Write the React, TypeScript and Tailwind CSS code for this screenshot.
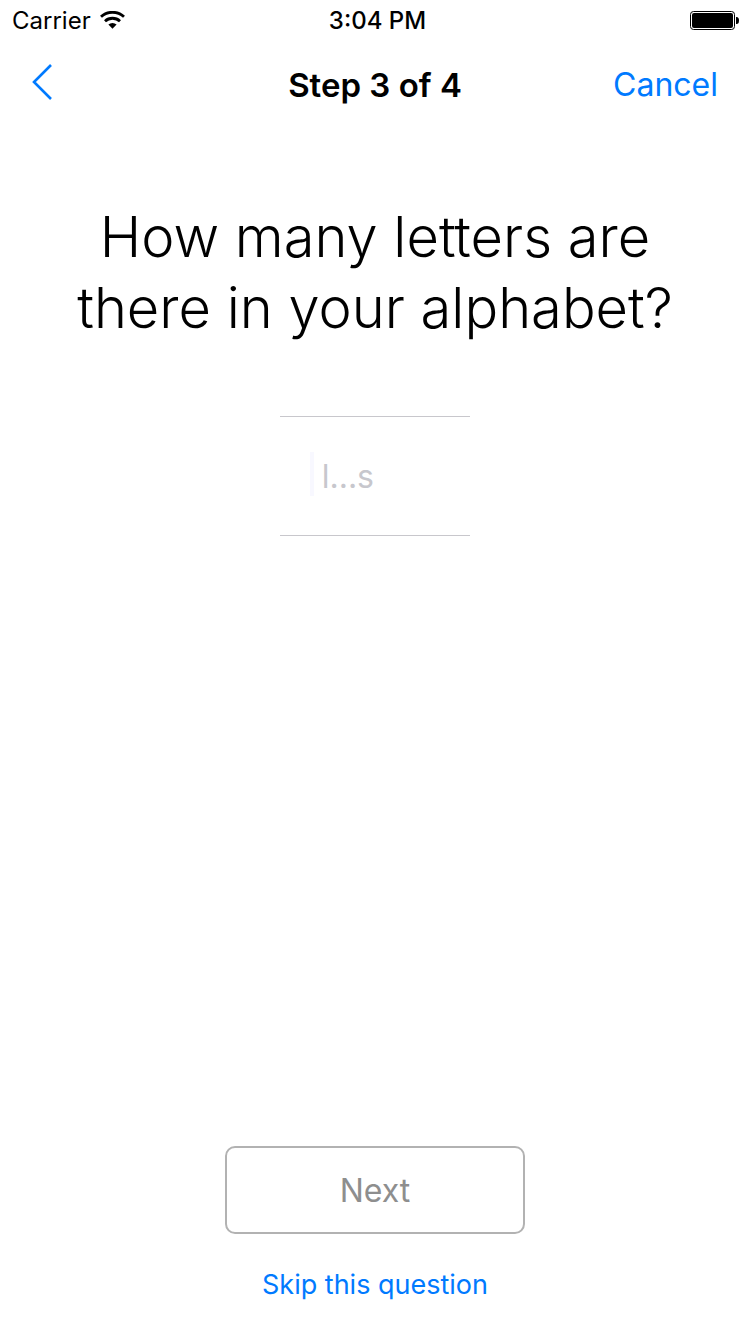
import React from "react";

function StatusBar() {
  return (
    <div className="grid h-[42px] grid-cols-3 items-center pl-3 pr-[11px] text-2xl leading-10">
      <div className="flex items-center gap-[9px]">
        <span>Carrier</span>
        <svg width="25" height="20" viewBox="0 0 25 20" aria-hidden="true">
          <path d="M1 5.8a16.8 16.8 0 0 1 23 0M5 10.2a11 11 0 0 1 15 0" fill="none" stroke="#000" strokeWidth="2.8" />
          <path d="M8.4 13.6a6.2 6.2 0 0 1 8.2 0L12.5 17.8Z" />
        </svg>
      </div>
      <span className="pl-1 text-center font-medium">3:04 PM</span>
      <svg className="justify-self-end" width="49" height="20" viewBox="0 0 49 20" aria-hidden="true">
        <rect x="0.5" y="0.5" width="44" height="18" rx="3" fill="none" stroke="#000" />
        <rect x="2" y="2" width="41" height="15" rx="2" />
        <path d="M46 6h0.5a2.5 3.5 0 0 1 0 7H46Z" />
      </svg>
    </div>
  );
}

function NavBar() {
  return (
    <header className="grid h-[86px] grid-cols-3 items-center px-8 text-[32px] leading-10">
      <button type="button" aria-label="Back" className="justify-self-start">
        <svg width="20" height="42" viewBox="0 0 20 42" fill="none" stroke="#007aff" strokeWidth="2.6" aria-hidden="true">
          <path d="M19 1 2 18l17 17" />
        </svg>
      </button>
      <h1 className="whitespace-nowrap text-center text-[33px] font-semibold leading-[38px]">Step 3 of 4</h1>
      <button type="button" className="justify-self-end text-[#007aff]">Cancel</button>
    </header>
  );
}

export default function App() {
  return (
    <div className="flex min-h-screen flex-col bg-white font-['Inter',sans-serif] text-black">
      <StatusBar />
      <NavBar />
      <main className="flex grow flex-col items-center pt-[74px]">
        <label htmlFor="letters" className="max-w-[630px] text-center text-[56px] font-light leading-[71px]">
          How many letters are <br />there in your alphabet?
        </label>
        <div className="mt-[72px] flex h-[120px] w-[190px] items-center border-y border-[#c8c7cc] pl-[30px]">
          <span className="mb-1 h-11 w-1 bg-[#f8f8ff]" />
          <input
            id="letters"
            inputMode="numeric"
            placeholder="l...s"
            className="ml-2 w-full min-w-0 bg-transparent pt-0.5 text-[32px] leading-10 outline-none placeholder:text-[#c7c7cd]"
          />
        </div>
      </main>
      <footer className="flex flex-col items-center pb-[29px]">
        <button type="button" disabled className="h-[88px] w-[300px] rounded-[10px] border-2 border-[#b2b2b2] pt-0.5 text-[32px] text-[#8e8e8e]">
          Next
        </button>
        <a href="#skip" className="mt-[31px] text-[27px] leading-10 text-[#007aff]">Skip this question</a>
      </footer>
    </div>
  );
}
